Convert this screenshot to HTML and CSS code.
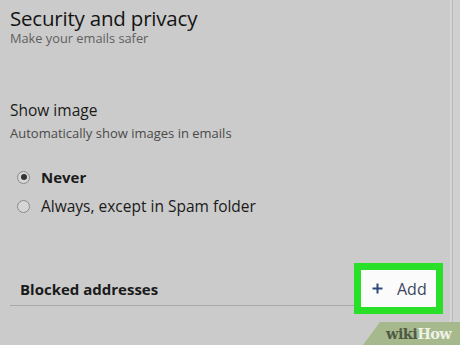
FILE: index.html
```html
<!DOCTYPE html>
<html>
<head>
<meta charset="utf-8">
<link rel="stylesheet" href="styles.css">
</head>
<body>
<div class="page">
  <main class="content">
    <header class="section-head">
      <h1 class="title">Security and privacy</h1>
      <p class="subtitle">Make your emails safer</p>
    </header>
    <section class="setting">
      <h2 class="setting-title">Show image</h2>
      <p class="setting-desc">Automatically show images in emails</p>
      <div class="options">
        <label class="option">
          <span class="radio checked"></span>
          <span class="option-label bold">Never</span>
        </label>
        <label class="option">
          <span class="radio"></span>
          <span class="option-label">Always, except in Spam folder</span>
        </label>
      </div>
    </section>
    <section class="blocked">
      <div class="blocked-label">Blocked addresses</div>
      <div class="add-wrap">
        <button class="add-btn">
          <svg class="plus" width="11" height="11" viewBox="0 0 11 11"><path d="M5.5 0.5v10M0.5 5.5h10" stroke="#2b4a78" stroke-width="2" fill="none"/></svg>
          <span>Add</span>
        </button>
      </div>
    </section>
  </main>
  <div class="scrollbar"></div>
</div>
<div class="watermark"><span class="wiki">wiki</span><span class="how">How</span></div>
</body>
</html>
```
FILE: styles.css
```css
html, body {
  margin: 0;
  padding: 0;
  width: 460px;
  height: 345px;
  overflow: hidden;
  background: #cbcbcb;
  font-family: "Open Sans", "Noto Sans", sans-serif;
  color: #1c1c1c;
}
.page {
  display: flex;
  height: 345px;
}
.content {
  flex: 1;
  display: flex;
  flex-direction: column;
  padding-left: 10px;
}
.title {
  margin: 0;
  padding-top: 8px;
  font-weight: 400;
  font-size: 20.5px;
  line-height: 21px;
  letter-spacing: -0.2px;
  color: #141414;
}
.subtitle {
  margin: 1px 0 0;
  font-size: 12.8px;
  line-height: 16px;
  color: #5f5f5f;
}
.setting {
  margin-top: 53px;
}
.setting-title {
  margin: 0;
  font-weight: 400;
  font-size: 15.5px;
  line-height: 22px;
  color: #1a1a1a;
}
.setting-desc {
  margin: 3px 0 0;
  font-size: 13px;
  line-height: 18px;
  color: #4a4a4a;
}
.options {
  margin-top: 26px;
  padding-left: 7px;
  display: flex;
  flex-direction: column;
  gap: 11px;
}
.option {
  display: flex;
  align-items: center;
  gap: 11px;
  height: 18px;
  font-size: 15.5px;
  color: #1a1a1a;
}
.option-label.bold {
  font-size: 15px;
  font-weight: 700;
}
.radio {
  width: 11px;
  height: 11px;
  border-radius: 50%;
  border: 1px solid #8a8a8a;
  background: #d6d6d6;
  box-sizing: content-box;
  display: flex;
  align-items: center;
  justify-content: center;
}
.radio.checked::after {
  content: "";
  width: 6px;
  height: 6px;
  border-radius: 50%;
  background: #333;
}
.blocked {
  margin-top: 48px;
  display: flex;
  align-items: flex-start;
}
.blocked-label {
  flex: 1;
  padding: 16px 0 6px 10px;
  height: 43px;
  box-sizing: border-box;
  font-weight: 700;
  font-size: 15px;
  line-height: 20px;
  color: #1a1a1a;
  border-bottom: 1px solid #a8a8a8;
}
.add-wrap {
  border: 7px solid #27e027;
  margin-right: 7px;
}
.add-btn {
  display: flex;
  align-items: center;
  gap: 14px;
  width: 75px;
  height: 37px;
  padding: 0 0 0 11px;
  border: none;
  background: #fbfbfb;
  font-family: "Open Sans", "Noto Sans", sans-serif;
  font-size: 16px;
  color: #3d4660;
}
.plus {
  display: block;
  flex: none;
}
.scrollbar {
  width: 9px;
  border-left: 1px solid #d9d9d9;
  box-shadow: inset 1px 0 0 #d2d2d2, inset 2px 0 0 #b9b9b9;
  background: #d0d0d0;
}
.watermark {
  position: absolute;
  left: 363px;
  top: 322px;
  width: 97px;
  height: 23px;
  background: #a6b98c;
  clip-path: polygon(17px 0, 100% 0, 100% 100%, 0 100%);
  font-family: "DejaVu Serif", serif;
  font-weight: 700;
  font-size: 14.5px;
  line-height: 23px;
  padding-left: 23px;
  box-sizing: border-box;
  letter-spacing: -0.6px;
  white-space: nowrap;
}
.wiki { color: #4f5a45; }
.how { color: #eef2e6; }
```
